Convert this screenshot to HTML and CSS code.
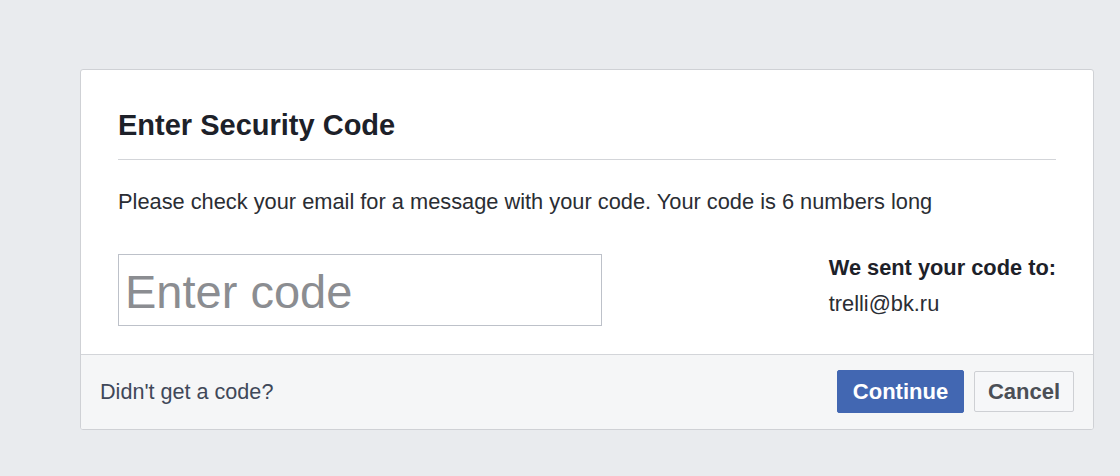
FILE: index.html
```html
<!DOCTYPE html>
<html lang="en">
<head>
<meta charset="utf-8">
<title>Enter Security Code</title>
<link rel="stylesheet" href="styles.css">
</head>
<body>
<div class="card">
  <div class="card-body">
    <h2 class="title">Enter Security Code</h2>
    <p class="message">Please check your email for a message with your code. Your code is 6 numbers long</p>
    <div class="code-row">
      <input class="code-input" type="text" placeholder="Enter code">
      <div class="sent-to">
        <div class="sent-label">We sent your code to:</div>
        <div class="sent-email">trelli@bk.ru</div>
      </div>
    </div>
  </div>
  <div class="card-footer">
    <a class="resend-link" href="#">Didn't get a code?</a>
    <div class="actions">
      <button class="btn btn-primary" type="button">Continue</button>
      <button class="btn btn-secondary" type="button">Cancel</button>
    </div>
  </div>
</div>
</body>
</html>
```

FILE: styles.css
```css
html, body {
  margin: 0;
  padding: 0;
}

body {
  background: #e9ebee;
  font-family: "Liberation Sans", Arial, sans-serif;
  color: #1d2129;
  padding: 69px 0 0 80px;
  height: 476px;
  box-sizing: border-box;
}

.card {
  width: 1014px;
  box-sizing: border-box;
  background: #ffffff;
  border: 1px solid #cfd1d5;
  border-radius: 3px;
  overflow: hidden;
}

.card-body {
  padding: 38px 37px 28px 37px;
}

.title {
  margin: 0;
  font-size: 29px;
  line-height: 34px;
  font-weight: bold;
  color: #1d2129;
  padding-bottom: 17px;
  border-bottom: 1px solid #d3d5d9;
}

.message {
  margin: 29px 0 0 0;
  font-size: 21.8px;
  line-height: 26px;
  color: #2a2d33;
}

.code-row {
  margin-top: 39px;
  display: flex;
  justify-content: space-between;
  align-items: flex-start;
}

.code-input {
  width: 484px;
  height: 72px;
  box-sizing: border-box;
  border: 1px solid #bdc1c9;
  padding: 2px 6px 0 6px;
  margin: 0;
  font-family: "Liberation Sans", Arial, sans-serif;
  font-size: 47px;
  color: #1d2129;
  outline: none;
  background: #fff;
}

.code-input::placeholder {
  color: #8b8d91;
}

.sent-to {
  display: flex;
  flex-direction: column;
  gap: 10px;
  padding-top: 1px;
  font-size: 21.8px;
  line-height: 26px;
}

.sent-label {
  font-weight: bold;
  color: #1d2129;
}

.sent-email {
  color: #2a2d33;
}

.card-footer {
  background: #f5f6f7;
  border-top: 1px solid #d3d5d9;
  padding: 15px 19px 16px 19px;
  display: flex;
  justify-content: space-between;
  align-items: center;
}

.resend-link {
  font-size: 21.6px;
  line-height: 26px;
  color: #3f4859;
  text-decoration: none;
}

.actions {
  display: flex;
  gap: 10px;
  align-items: center;
}

.btn {
  font-family: "Liberation Sans", Arial, sans-serif;
  font-size: 22px;
  font-weight: bold;
  line-height: 26px;
  border-radius: 2px;
  margin: 0;
  cursor: pointer;
  box-sizing: border-box;
}

.btn-primary {
  width: 127px;
  height: 43px;
  background: #4267b2;
  border: 1px solid #4267b2;
  color: #ffffff;
}

.btn-secondary {
  width: 100px;
  height: 41px;
  background: #f6f7f9;
  border: 1px solid #ced0d4;
  color: #4b4f56;
}
```
